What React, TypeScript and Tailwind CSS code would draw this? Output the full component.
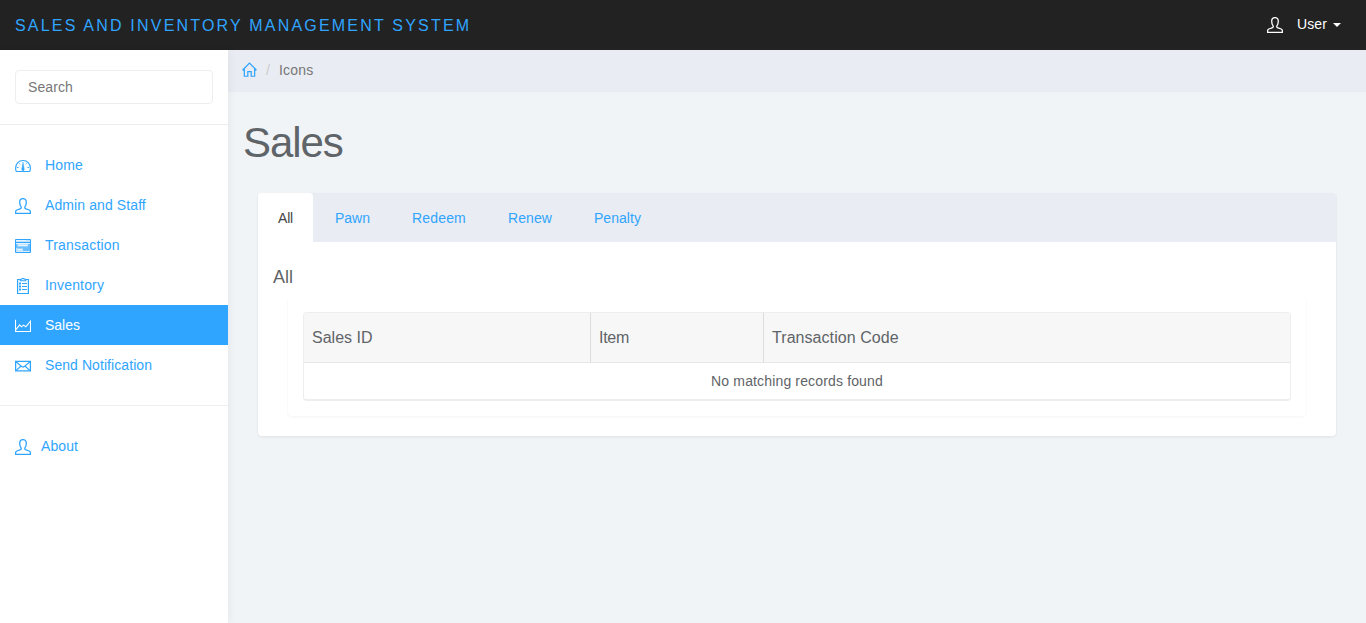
import type { ReactNode } from 'react';

type IconProps = { children: ReactNode; size?: string };

function Icon({ children, size = 'h-4 w-4' }: IconProps) {
  return (
    <svg viewBox="0 0 16 16" className={`${size} block shrink-0`} fill="none" stroke="currentColor" strokeWidth="1">
      {children}
    </svg>
  );
}

const UserIcon = () => (
  <Icon>
    <path strokeWidth="1.300" strokeLinejoin="round" d="M8 .6C5.700.6 4.700 2 4.700 4.200c0 2 .5 3.400 1.400 4.700.4 1-.1 1.600-1 1.900L1.800 12c-.8.4-1.200 1.200-1.200 2v1.400h14.800V14c0-.8-.4-1.600-1.200-2l-3.300-1.200c-.9-.3-1.400-.9-1-1.900.9-1.300 1.400-2.700 1.400-4.700C11.300 2 10.300.6 8 .6Z" />
  </Icon>
);

const DashboardIcon = () => (
  <Icon>
    <path strokeWidth="1.200" d="M.6 10.200C.6 5.800 3.800 2.500 8 2.500s7.400 3.300 7.400 7.700c0 1-.1 1.900-.5 2.700-.2.400-.5.600-1 .6H2.100c-.5 0-.8-.2-1-.6-.4-.8-.5-1.700-.5-2.700Z" />
    <path strokeWidth=".9" d="M8 4v2M4.200 5.300l.9 1M11.800 5.300l-.9 1M2 9.500h1.600M12.400 9.500H14" />
    <path fill="currentColor" strokeWidth=".6" d="M7.700 6.200h.6l.9 5.300c0 1.500-2.400 1.500-2.400 0Z" />
  </Icon>
);

const TransactionIcon = () => (
  <Icon>
    <path fill="currentColor" fillOpacity=".3" d="M.5 1.500h15v13H.5Z" />
    <path d="M1 4.500h14" />
    <path stroke="white" strokeOpacity=".6" d="M1 2.500h10M1 5.500h14M3 7.500h9" />
    <path fill="currentColor" fillOpacity=".6" stroke="none" d="M1 6h1.500v4H1ZM13 6h2v7h-2ZM2.500 8.500H13v2H2.500ZM8 10.500h5V13H8Z" />
    <path stroke="white" strokeOpacity=".85" d="M3 11.500h3.500" />
    <path stroke="white" strokeOpacity=".4" d="M2 13.500h12" />
  </Icon>
);

const ClipboardIcon = () => (
  <Icon>
    <path strokeWidth="1.200" d="M5 1.500H2.600v14h10.800v-14H11" />
    <path strokeWidth="1.100" d="M5.300 2.800V1.300h1.500L7.200.5h1.600l.4.800h1.500v1.500Z" />
    <path strokeWidth="2" d="M4 5.500h2M4 8.500h2M4 11.500h2" />
    <path d="M7 5.500h5M7 8.500h5M7 11.500h5" />
  </Icon>
);

const ChartIcon = () => (
  <Icon>
    <path strokeWidth="1.100" d="M.5 1.800v11.700h15V3.300l-4.700 5.500-2.300-1.700-2 1.700-1.800-2L.7 11.800" />
  </Icon>
);

const MailIcon = () => (
  <Icon>
    <path strokeWidth="1.300" d="M.6 3.400h14.800v9.500H.6Z" />
    <path strokeWidth="1.200" d="m1 3.800 5.800 4.800c.8.600 1.600.6 2.400 0L15 3.800M1 12.600l4.800-4.300M15 12.600l-4.800-4.300" />
  </Icon>
);

const HomeIcon = () => (
  <Icon size="h-[15px] w-[15px]">
    <path strokeWidth="1.300" d="M.7 8.500 8 1.100l7.300 7.400M2.500 7v8.200h3.700v-5h3.600v5h3.700V7M.6 8.700h1.900M13.500 8.700h1.900" />
  </Icon>
);

const navItems = [
  { label: 'Home', icon: <DashboardIcon />, tracking: 'tracking-[0.15px]' },
  { label: 'Admin and Staff', icon: <UserIcon />, tracking: 'tracking-[0.1px]' },
  { label: 'Transaction', icon: <TransactionIcon />, tracking: 'tracking-[0.2px]' },
  { label: 'Inventory', icon: <ClipboardIcon />, tracking: 'tracking-[0.17px]' },
  { label: 'Sales', icon: <ChartIcon />, tracking: 'tracking-normal', active: true },
  { label: 'Send Notification', icon: <MailIcon />, tracking: 'tracking-[0.07px]' },
];

const tabs = [
  { label: 'All', style: 'w-[55px] rounded-t bg-white text-[#444] tracking-[-0.2px]' },
  { label: 'Pawn', style: 'w-[75px] text-[#30a5ff]' },
  { label: 'Redeem', style: 'w-[94px] text-[#30a5ff] tracking-[0.15px]' },
  { label: 'Renew', style: 'w-[84px] text-[#30a5ff] tracking-[0.1px]' },
  { label: 'Penalty', style: 'w-[87px] text-[#30a5ff] tracking-[0.05px]' },
];

function Header() {
  return (
    <header className="flex h-[50px] shrink-0 items-center justify-between bg-[#222] pr-[25px] pl-[15px]">
      <a href="#" className="mt-0.5 text-base leading-5 tracking-[2.2px] text-[#30a5ff] uppercase">
        Sales and Inventory Management System
      </a>
      <button className="flex items-center text-sm leading-5 text-white">
        <UserIcon />
        <span className="mr-[6px] ml-[14px] -mt-0.5 tracking-[0.1px]">User</span>
        <svg viewBox="0 0 8 4" className="h-1 w-2" fill="currentColor">
          <path d="M0 0h8L4 4Z" />
        </svg>
      </button>
    </header>
  );
}

function Sidebar() {
  return (
    <aside className="z-10 w-[228px] shrink-0 bg-white shadow-[1px_0_10px_rgba(0,0,0,0.05)]">
      <div className="border-b border-[#eee] px-[15px] py-5">
        <input
          placeholder="Search"
          className="block h-[34px] w-full rounded border border-[#eee] px-3 text-sm tracking-[0.1px] text-[#555] outline-none placeholder:text-[#777]"
        />
      </div>
      <nav className="border-b border-[#eee] py-5">
        {navItems.map((item) => (
          <a
            key={item.label}
            href="#"
            className={`flex h-10 items-center px-[15px] text-sm leading-5 ${item.tracking} ${
              item.active ? 'bg-[#30a5ff] text-white' : 'text-[#30a5ff]'
            }`}
          >
            <span className="mt-0.5 mr-[14px]">{item.icon}</span>
            {item.label}
          </a>
        ))}
      </nav>
      <a href="#" className="mt-5 flex h-10 items-center px-[15px] text-sm leading-5 tracking-[0.1px] text-[#30a5ff]">
        <span className="mt-0.5 mr-[10px]">
          <UserIcon />
        </span>
        About
      </a>
    </aside>
  );
}

function SalesTable() {
  return (
    <div className="overflow-hidden rounded border border-b-2 border-[#eee]">
      <table className="w-full table-fixed border-separate border-spacing-0 text-left">
        <colgroup>
          <col className="w-[287px]" />
          <col className="w-[173px]" />
          <col />
        </colgroup>
        <thead>
          <tr className="h-[50px] bg-[#f7f7f7] text-base">
            <th className="border-r border-b border-[#ddd] border-b-[#e6e6e6] px-2 font-normal">Sales ID</th>
            <th className="border-r border-b border-[#ddd] border-b-[#e6e6e6] px-2 font-normal tracking-[-0.3px]">
              Item
            </th>
            <th className="border-b border-[#e6e6e6] px-2 font-normal tracking-[0.06px]">Transaction Code</th>
          </tr>
        </thead>
        <tbody>
          <tr className="h-9">
            <td colSpan={3} className="pb-px text-center text-sm leading-5 tracking-[0.15px]">
              No matching records found
            </td>
          </tr>
        </tbody>
      </table>
    </div>
  );
}

export default function App() {
  return (
    <div className="flex h-[623px] flex-col overflow-hidden bg-[#f1f4f7] font-['Liberation_Sans',Arial,sans-serif] text-[#5f6468]">
      <Header />
      <div className="flex min-h-0 flex-1">
        <Sidebar />
        <main className="min-w-0 flex-1">
          <div className="flex h-[42px] items-center bg-[#e9ecf2] pl-[14px] text-sm leading-5">
            <a href="#" className="-mt-[3px] text-[#30a5ff]">
              <HomeIcon />
            </a>
            <span className="mr-[9px] ml-[9px] -mt-0.5 text-[#ccc]">/</span>
            <span className="-mt-0.5 tracking-[0.2px] text-[#777]">Icons</span>
          </div>
          <h1 className="mt-7 pl-[15px] text-[42px] leading-[46px] font-light tracking-[-1.1px]">Sales</h1>
          <section className="mx-[30px] mt-[27px] h-[243px] rounded bg-white shadow-[0_1px_1px_1px_rgba(0,0,0,0.04)]">
            <div className="flex h-[49px] gap-0.5 rounded-t bg-[#e9ecf2] text-sm leading-5">
              {tabs.map((tab) => (
                <button key={tab.label} className={`text-center ${tab.style}`}>
                  {tab.label}
                </button>
              ))}
            </div>
            <div className="px-[15px] pt-[25px]">
              <h4 className="text-lg leading-5">All</h4>
              <div className="mx-[15px] mt-[10px] rounded px-[15px] py-[15px] shadow-[0_1px_1px_1px_rgba(0,0,0,0.025)]">
                <SalesTable />
              </div>
            </div>
          </section>
        </main>
      </div>
    </div>
  );
}
